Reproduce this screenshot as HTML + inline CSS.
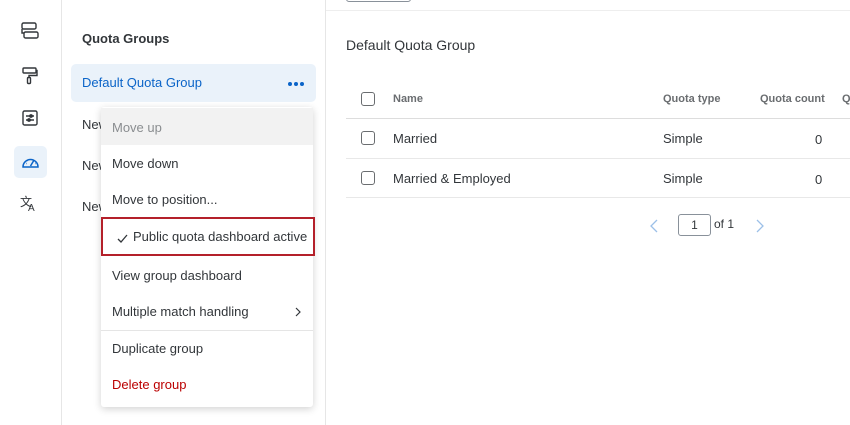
<!DOCTYPE html>
<html><head><style>
*{margin:0;padding:0;box-sizing:border-box}
body{width:850px;height:425px;overflow:hidden;background:#fff;font-family:"Liberation Sans",sans-serif;color:#32363a;position:relative}
.abs{position:absolute}
.rail{left:0;top:0;width:62px;height:425px;border-right:1px solid #e6e6e6}
.side{left:62px;top:0;width:264px;height:425px;border-right:1px solid #e6e6e6}
.t{position:absolute;white-space:nowrap}
.menu{left:101px;top:107px;width:212px;height:300px;background:#fff;box-shadow:0 2px 8px rgba(0,0,0,.18);border-radius:3px}
.mi{position:absolute;left:11px;font-size:13px;color:#32363a}
.cb{position:absolute;width:14px;height:14px;border:1px solid #6a6d70;border-radius:3px}
.hd{font-size:11px;font-weight:bold;color:#6a6d70}
.dot{position:absolute;width:4px;height:4px;border-radius:2px;background:#0b64c8;top:82px}
</style></head><body>
<div class="abs rail">
<svg class="abs" style="left:21px;top:22px" width="18" height="18" viewBox="0 0 18 18" fill="none" stroke="#32363a" stroke-width="1.4"><rect x="1" y="1" width="14" height="6" rx="1.5"/><rect x="3" y="10" width="14" height="6" rx="1.5"/><path d="M1 7v4h2"/></svg>
<svg class="abs" style="left:22px;top:67px" width="16" height="18" viewBox="0 0 16 18" fill="none" stroke="#32363a" stroke-width="1.4"><rect x="1" y="1" width="13" height="5" rx="1"/><path d="M14 3.5h1v5H7v2"/><rect x="5.5" y="10.5" width="3" height="6" rx="1"/></svg>
<svg class="abs" style="left:22px;top:110px" width="16" height="16" viewBox="0 0 16 16" fill="none" stroke="#32363a" stroke-width="1.4"><rect x="1" y="1" width="14" height="14" rx="1.5"/><path d="M4 6h8M4 10h8"/><circle cx="9" cy="6" r="1.2"/><circle cx="7" cy="10" r="1.2"/></svg>
<div class="abs" style="left:14px;top:146px;width:33px;height:32px;background:#eaf2fa;border-radius:5px"></div>
<svg class="abs" style="left:21px;top:153px" width="19" height="16" viewBox="0 0 19 16" fill="none" stroke="#0b64c8" stroke-width="1.5"><path d="M2 14a7.5 7.5 0 1 1 15 0z"/><path d="M9.5 13l3-5M5 10.5h.5M9.5 6v.5M14 10.5h.5M6.5 7.5l.3.3M12.5 7.5l-.3.3"/></svg>
<div class="t" style="left:20px;top:196px;font-size:12px;line-height:12px">文</div>
<div class="t" style="left:28px;top:204px;font-size:10px;line-height:10px">A</div>
</div>
<div class="abs side">
<div class="t" style="left:20px;top:31px;font-size:13px;font-weight:bold">Quota Groups</div>
<div class="abs" style="left:9px;top:64px;width:245px;height:38px;background:#eaf2fa;border-radius:5px"></div>
<div class="t" style="left:20px;top:75px;font-size:13px;color:#0b64c8">Default Quota Group</div>
<div class="dot" style="left:226px"></div><div class="dot" style="left:232px"></div><div class="dot" style="left:238px"></div>
<div class="t" style="left:20px;top:117px;font-size:13px">New</div>
<div class="t" style="left:20px;top:158px;font-size:13px">New</div>
<div class="t" style="left:20px;top:199px;font-size:13px">New</div>
</div>
<div class="abs menu">
<div class="abs" style="left:0;top:1px;width:212px;height:37px;background:#f2f2f2"></div>
<div class="mi" style="top:13px;color:#8a8d90">Move up</div>
<div class="mi" style="top:49px">Move down</div>
<div class="mi" style="top:85px">Move to position...</div>
<div class="abs" style="left:0;top:110px;width:214px;height:39px;border:2px solid #b4202a"></div>
<svg class="abs" style="left:16px;top:127px" width="11" height="9" viewBox="0 0 11 9" fill="none" stroke="#32363a" stroke-width="1.3"><path d="M1 5l3 3 6-7"/></svg>
<div class="mi" style="top:122px;left:32px">Public quota dashboard active</div>
<div class="mi" style="top:161px">View group dashboard</div>
<div class="mi" style="top:197px">Multiple match handling</div>
<svg class="abs" style="left:194px;top:200px" width="6" height="10" viewBox="0 0 6 10" fill="none" stroke="#32363a" stroke-width="1.2"><path d="M1 1l4 4-4 4"/></svg>
<div class="abs" style="left:0;top:223px;width:212px;height:1px;background:#e5e5e5"></div>
<div class="mi" style="top:234px">Duplicate group</div>
<div class="mi" style="top:270px;color:#bb0000">Delete group</div>
</div>
<div class="abs" style="left:346px;top:-4px;width:65px;height:6px;border:1px solid #89919a;border-radius:3px"></div>
<div class="abs" style="left:326px;top:10px;width:524px;height:1px;background:#eee"></div>
<div class="t" style="left:346px;top:37px;font-size:14px">Default Quota Group</div>
<div class="cb" style="left:361px;top:92px"></div>
<div class="t hd" style="left:393px;top:93px">Name</div>
<div class="t hd" style="left:663px;top:93px">Quota type</div>
<div class="t hd" style="left:760px;top:93px">Quota count</div>
<div class="t hd" style="left:842px;top:93px">Q</div>
<div class="abs" style="left:346px;top:118px;width:504px;height:1px;background:#ddd"></div>
<div class="cb" style="left:361px;top:131px"></div>
<div class="t" style="left:393px;top:131px;font-size:13px">Married</div>
<div class="t" style="left:663px;top:131px;font-size:13px">Simple</div>
<div class="t" style="left:815px;top:132px;font-size:13px">0</div>
<div class="abs" style="left:346px;top:158px;width:504px;height:1px;background:#e8e8e8"></div>
<div class="cb" style="left:361px;top:171px"></div>
<div class="t" style="left:393px;top:171px;font-size:13px">Married &amp; Employed</div>
<div class="t" style="left:663px;top:171px;font-size:13px">Simple</div>
<div class="t" style="left:815px;top:172px;font-size:13px">0</div>
<div class="abs" style="left:346px;top:197px;width:504px;height:1px;background:#e8e8e8"></div>
<svg class="abs" style="left:650px;top:219px" width="8" height="14" viewBox="0 0 8 14" fill="none" stroke="#9cc0e8" stroke-width="1.3"><path d="M7 1L1 7l6 6"/></svg>
<div class="abs" style="left:678px;top:214px;width:33px;height:22px;border:1px solid #89919a;border-radius:3px;font-size:12px;text-align:center;line-height:20px">1</div>
<div class="t" style="left:714px;top:217px;font-size:12px">of 1</div>
<svg class="abs" style="left:756px;top:219px" width="8" height="14" viewBox="0 0 8 14" fill="none" stroke="#9cc0e8" stroke-width="1.3"><path d="M1 1l6 6-6 6"/></svg>
</body></html>
